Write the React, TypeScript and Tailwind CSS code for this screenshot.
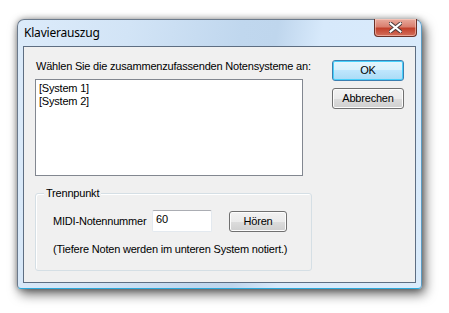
import React from 'react';

const sans = "font-['Liberation_Sans',Arial,sans-serif] tracking-[-0.2px]";

const VistaButton: React.FC<{ label: string; isDefault?: boolean; className?: string }> = ({
  label,
  isDefault,
  className = '',
}) => {
  return (
    <button
      className={`${className} ${sans} text-[11px] text-black rounded-[3px] border flex items-center justify-center ${
        isDefault
          ? 'border-[#3c7fb1] bg-[linear-gradient(#e5f5fd_0%,#d8f0fc_50%,#bee6fd_50%,#a9dbf6_100%)] shadow-[inset_0_0_0_1px_#48d0fb]'
          : 'border-[#707070] bg-[linear-gradient(#f2f2f2_0%,#ebebeb_50%,#dddddd_50%,#cfcfcf_100%)] shadow-[inset_0_0_0_1px_#fcfcfc]'
      }`}
    >
      {label}
    </button>
  );
};

export default function App() {
  return (
    <div className="w-[449px] h-[313px] bg-white pt-[19px] pl-[17px] overflow-hidden">
      {/* Window frame */}
      <div className="w-[405px] h-[270px] rounded-t-[7px] rounded-b-[4px] border border-[#6b7a8c] border-b-[#2aa9dc] border-r-[#5b9cc4] shadow-[3px_5px_12px_rgba(0,0,0,0.6),0_0_6px_rgba(0,0,0,0.35)] bg-[linear-gradient(100deg,#dcebfa_0%,#d2e4f6_25%,#c0d7ee_50%,#bfd6ed_58%,#d7e9fb_68%,#daebfb_100%)] flex flex-col px-[5px] pb-[5px]">
        {/* Title bar */}
        <div className="h-[26px] flex items-start justify-between">
          <span className="font-['Noto_Sans',sans-serif] text-[12px] text-black mt-[7px] ml-[1px] leading-none tracking-[-0.2px]">
            Klavierauszug
          </span>
          <div className="w-[43px] h-[18px] -mt-[1px] mr-[-1px] rounded-b-[4px] border border-t-0 border-[#6a3128] bg-[linear-gradient(#e8aa9c_0%,#d98070_45%,#c2412c_55%,#d3705c_100%)] shadow-[inset_0_0_0_1px_rgba(255,220,210,0.5)] flex items-center justify-center">
            <svg width="13" height="11" viewBox="0 0 13 11">
              <path
                d="M1.5 1.5 L11.5 9.5 M11.5 1.5 L1.5 9.5"
                stroke="#4a3a3a"
                strokeWidth="4"
                strokeLinecap="square"
              />
              <path
                d="M1.5 1.5 L11.5 9.5 M11.5 1.5 L1.5 9.5"
                stroke="#ffffff"
                strokeWidth="2"
                strokeLinecap="square"
              />
            </svg>
          </div>
        </div>

        {/* Client area */}
        <div className={`flex-1 bg-[#f0f0f0] border border-[#5e6e82] ${sans} text-[11px] text-black flex pt-[13px] pl-[11px] pr-[12px]`}>
          <div className="flex flex-col w-[277px]">
            <div className="leading-[13px] pl-[1px] h-[19px] whitespace-nowrap">
              Wählen Sie die zusammenzufassenden Notensysteme an:
            </div>
            <div className="w-[268px] h-[97px] bg-white border border-[#828790] px-[3px] pt-[2px] leading-[13px]">
              <div>[System 1]</div>
              <div>[System 2]</div>
            </div>

            {/* Group box */}
            <div className="relative mt-[17px] w-[277px] h-[78px] border border-[#d5dfe5] rounded-[3px] shadow-[inset_1px_1px_0_#ffffff] pt-[16px] pl-[17px]">
              <span className="absolute -top-[7px] left-[8px] px-[2px] bg-[#f0f0f0] leading-[13px]">
                Trennpunkt
              </span>
              <div className="flex items-center h-[22px]">
                <span className="w-[99px] whitespace-nowrap">MIDI-Notennummer</span>
                <div className="w-[60px] h-[22px] bg-white border border-[#e3e9ef] border-t-[#abadb3] rounded-[2px] pl-[3px] pt-[2px] leading-[13px]">
                  60
                </div>
                <VistaButton label="Hören" className="ml-[17px] w-[58px] h-[21px]" />
              </div>
              <div className="mt-[11px] leading-[13px] whitespace-nowrap">
                (Tiefere Noten werden im unteren System notiert.)
              </div>
            </div>
          </div>

          <div className="flex flex-col gap-[7px] ml-[20px]">
            <VistaButton label="OK" isDefault className="w-[72px] h-[21px]" />
            <VistaButton label="Abbrechen" className="w-[72px] h-[21px]" />
          </div>
        </div>
      </div>
    </div>
  );
}
